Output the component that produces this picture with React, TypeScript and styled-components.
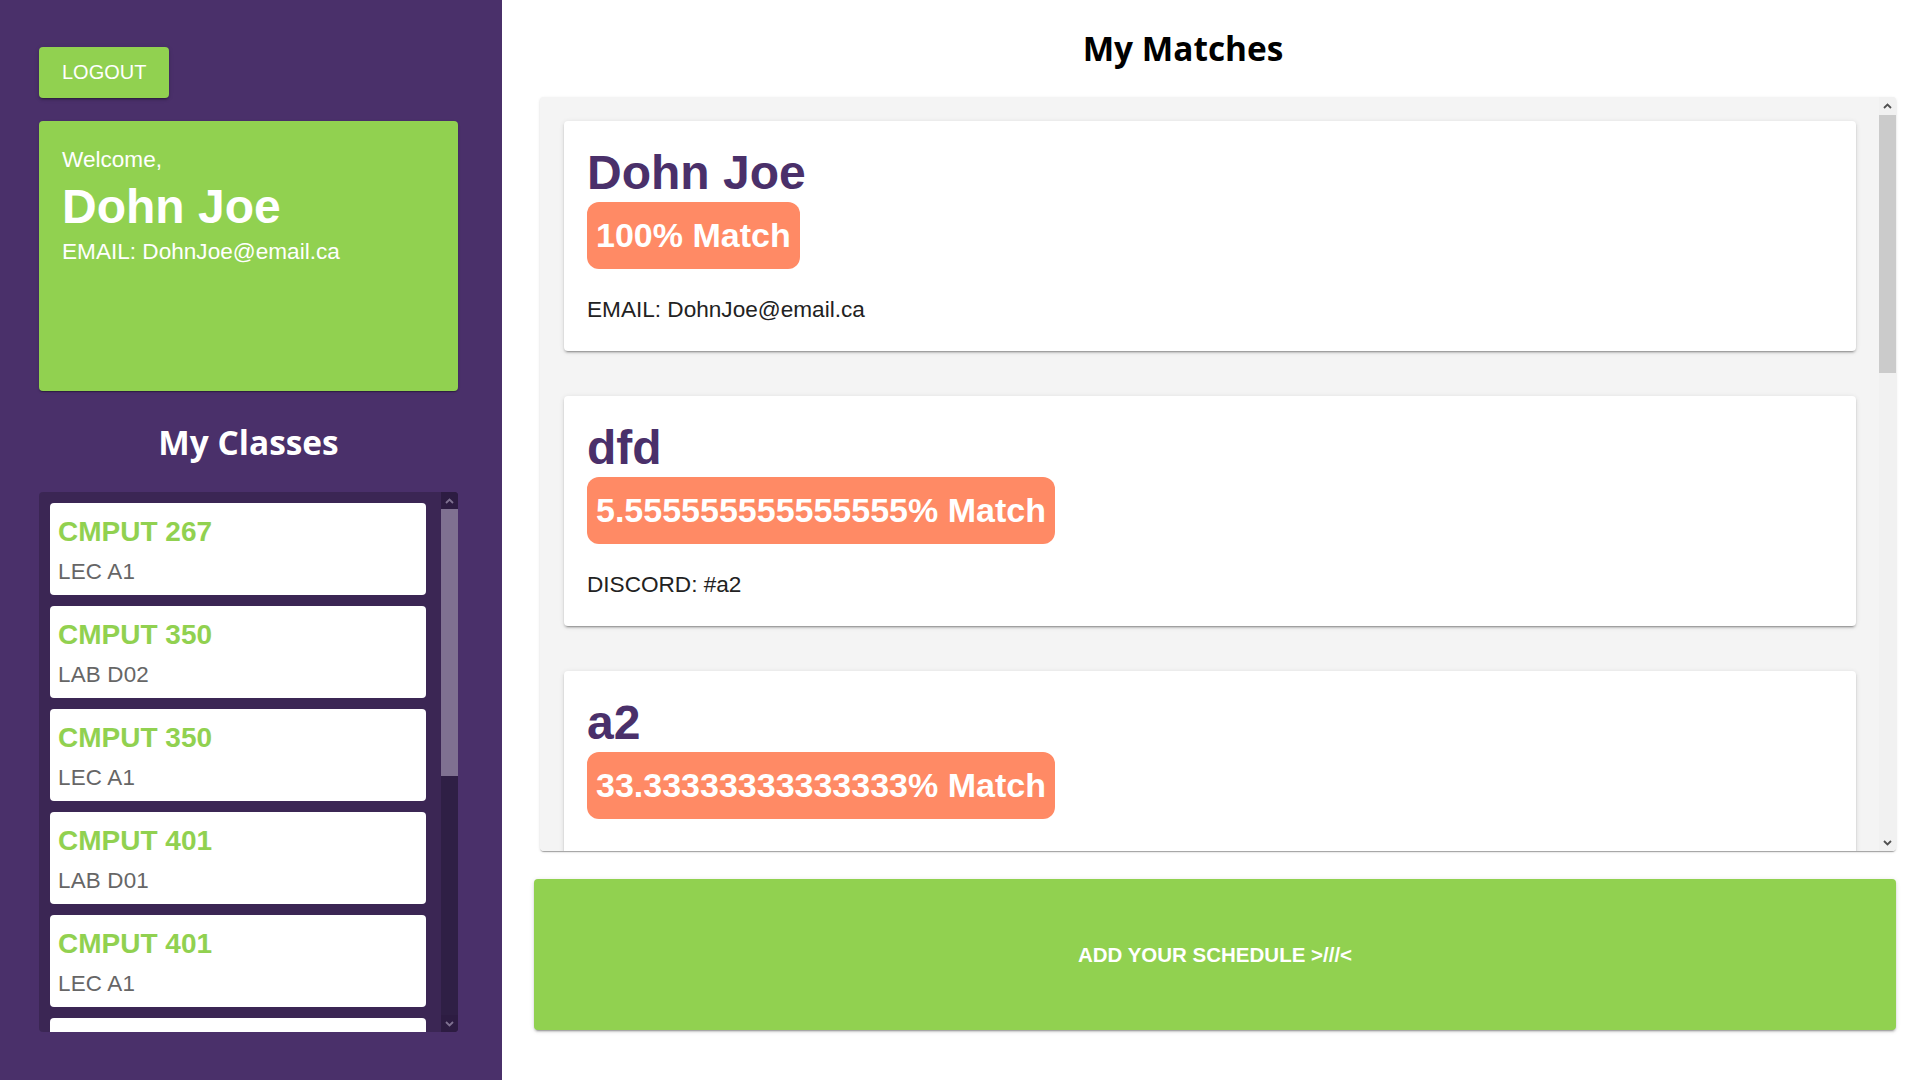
import styled, { createGlobalStyle } from 'styled-components';

const GREEN = '#91d150';
const PURPLE = '#4a306a';

const classes = [
  { id: 'c1', code: 'CMPUT 267', section: 'LEC A1' },
  { id: 'c2', code: 'CMPUT 350', section: 'LAB D02' },
  { id: 'c3', code: 'CMPUT 350', section: 'LEC A1' },
  { id: 'c4', code: 'CMPUT 401', section: 'LAB D01' },
  { id: 'c5', code: 'CMPUT 401', section: 'LEC A1' },
  { id: 'c6', code: 'CMPUT 404', section: 'LEC B1' },
];

const matches = [
  { id: 'm1', name: 'Dohn Joe', percent: '100', contact: 'EMAIL: DohnJoe@email.ca' },
  { id: 'm2', name: 'dfd', percent: '5.555555555555555', contact: 'DISCORD: #a2' },
  { id: 'm3', name: 'a2', percent: '33.33333333333333', contact: 'EMAIL: a2@email.ca' },
];

type BarColors = { track: string; thumb: string; button: string; arrow: string };

const darkBar: BarColors = { track: '#2f1f45', thumb: '#7f7191', button: '#2d1c42', arrow: '#7f7191' };
const lightBar: BarColors = { track: '#f1f1f1', thumb: '#cbcbcb', button: '#f1f1f1', arrow: '#505050' };

const Chevron = ({ up, color }: { up?: boolean; color: string }) => (
  <svg width="9" height="6" viewBox="0 0 9 6">
    <polyline
      points={up ? '1,5 4.5,1.5 8,5' : '1,1 4.5,4.5 8,1'}
      fill="none"
      stroke={color}
      strokeWidth="1.8"
    />
  </svg>
);

const Scrollbar = ({ colors, offset, size }: { colors: BarColors; offset: number; size: number }) => (
  <Bar $bg={colors.track}>
    <BarButton $bg={colors.button}>
      <Chevron up color={colors.arrow} />
    </BarButton>
    <Track>
      <Thumb $bg={colors.thumb} $offset={offset} $size={size} />
    </Track>
    <BarButton $bg={colors.button}>
      <Chevron color={colors.arrow} />
    </BarButton>
  </Bar>
);

const App = () => {
  return (
    <>
      <GlobalStyle />
      <Page>
        <Sidebar>
          <LogoutButton>LOGOUT</LogoutButton>
          <WelcomeCard>
            <Greeting>Welcome,</Greeting>
            <UserName>Dohn Joe</UserName>
            <Greeting>EMAIL: DohnJoe@email.ca</Greeting>
          </WelcomeCard>
          <SideTitle>My Classes</SideTitle>
          <ClassFrame>
            <ClassList>
              {classes.map((item) => (
                <ClassCard key={item.id}>
                  <ClassCode>{item.code}</ClassCode>
                  <ClassSection>{item.section}</ClassSection>
                </ClassCard>
              ))}
            </ClassList>
            <Scrollbar colors={darkBar} offset={0} size={267} />
          </ClassFrame>
        </Sidebar>

        <Main>
          <PageTitle>My Matches</PageTitle>
          <MatchFrame>
            <MatchList>
              {matches.map((match) => (
                <MatchCard key={match.id}>
                  <MatchName>{match.name}</MatchName>
                  <MatchBadge>{match.percent}% Match</MatchBadge>
                  <Contact>{match.contact}</Contact>
                </MatchCard>
              ))}
            </MatchList>
            <Scrollbar colors={lightBar} offset={1} size={258} />
          </MatchFrame>
          <ScheduleButton>ADD YOUR SCHEDULE &gt;///&lt;</ScheduleButton>
        </Main>
      </Page>
    </>
  );
};

const GlobalStyle = createGlobalStyle`
  * {
    box-sizing: border-box;
  }

  body {
    margin: 0;
    font-family: 'Liberation Sans', Arial, sans-serif;
  }
`;

const Page = styled.div`
  display: flex;
  height: 100vh;
  overflow: hidden;
`;

const Sidebar = styled.aside`
  width: 502px;
  flex-shrink: 0;
  padding: 47px 44px 48px 39px;

  display: flex;
  flex-direction: column;

  background-color: ${PURPLE};
`;

const LogoutButton = styled.button`
  align-self: flex-start;
  height: 51px;
  padding: 0 23px;

  font-family: 'Liberation Sans', Arial, sans-serif;
  font-size: 20px;
  color: #ffffff;

  background-color: ${GREEN};
  border: none;
  border-radius: 4px;
  box-shadow: 0 3px 1px -2px rgba(0, 0, 0, 0.2), 0 2px 2px 0 rgba(0, 0, 0, 0.14),
    0 1px 5px 0 rgba(0, 0, 0, 0.12);
`;

const WelcomeCard = styled.section`
  height: 270px;
  margin-top: 23px;
  padding: 26px 23px;

  color: #ffffff;
  background-color: ${GREEN};
  border-radius: 4px;
  box-shadow: 0 2px 1px -1px rgba(0, 0, 0, 0.2), 0 1px 1px 0 rgba(0, 0, 0, 0.14),
    0 1px 3px 0 rgba(0, 0, 0, 0.12);
`;

const Greeting = styled.div`
  font-size: 22.6px;
  line-height: 26px;
`;

const UserName = styled.div`
  margin: 6px 0 5px;

  font-size: 48px;
  font-weight: 700;
  line-height: 55px;
`;

const SideTitle = styled.h2`
  margin: 28px 0 27px;

  font-family: 'Open Sans', sans-serif;
  font-size: 33.4px;
  font-weight: 700;
  line-height: 46px;
  text-align: center;
  color: #ffffff;
`;

// list + hand drawn scrollbar side by side, the list clips what runs past the bottom
const ClassFrame = styled.div`
  flex: 1;
  min-height: 0;

  display: grid;
  grid-template-columns: minmax(0, 1fr) 17px;
  grid-template-rows: minmax(0, 1fr);

  background-color: rgba(0, 0, 0, 0.2);
  border-radius: 4px;
`;

const ClassList = styled.div`
  padding: 11px 15px 0 11px;

  display: flex;
  flex-direction: column;
  gap: 11px;

  overflow: hidden;
`;

const ClassCard = styled.div`
  flex-shrink: 0;
  padding: 13px 8px 11px;

  background-color: #ffffff;
  border-radius: 4px;
`;

const ClassCode = styled.div`
  margin-bottom: 11px;

  font-size: 28px;
  font-weight: 700;
  line-height: 32px;
  color: ${GREEN};
`;

const ClassSection = styled.div`
  font-size: 22.4px;
  line-height: 25px;
  letter-spacing: 0.2px;
  color: #666666;
`;

const Bar = styled.div<{ $bg: string }>`
  display: flex;
  flex-direction: column;

  background-color: ${(p) => p.$bg};
  border-radius: 0 4px 4px 0;
  overflow: hidden;
`;

const BarButton = styled.div<{ $bg: string }>`
  height: 17px;
  flex-shrink: 0;

  display: flex;
  align-items: center;
  justify-content: center;

  background-color: ${(p) => p.$bg};
`;

const Track = styled.div`
  flex: 1;
  min-height: 0;
  display: flex;
  flex-direction: column;
`;

const Thumb = styled.div<{ $bg: string; $offset: number; $size: number }>`
  height: ${(p) => p.$size}px;
  margin-top: ${(p) => p.$offset}px;

  background-color: ${(p) => p.$bg};
`;

const Main = styled.main`
  flex: 1;
  min-width: 0;
  padding: 25px 24px 50px 32px;

  display: flex;
  flex-direction: column;

  background-color: #ffffff;
`;

const PageTitle = styled.h1`
  margin: 0 0 26px;
  padding-right: 64px;

  font-family: 'Open Sans', sans-serif;
  font-size: 33.4px;
  font-weight: 700;
  line-height: 46px;
  text-align: center;
  color: #000000;
`;

const MatchFrame = styled.div`
  height: 754px;
  flex-shrink: 0;
  margin-left: 6px;

  display: grid;
  grid-template-columns: minmax(0, 1fr) 17px;
  grid-template-rows: minmax(0, 1fr);

  background-color: #f4f4f4;
  border-radius: 4px;
  box-shadow: 0 2px 1px -1px rgba(0, 0, 0, 0.2), 0 1px 1px 0 rgba(0, 0, 0, 0.14),
    0 1px 3px 0 rgba(0, 0, 0, 0.12);
`;

const MatchList = styled.div`
  padding: 24px 23px 0 24px;

  display: flex;
  flex-direction: column;
  gap: 45px;

  overflow: hidden;
  background-color: #f4f4f4;
  border-radius: 4px 0 0 4px;
`;

const MatchCard = styled.article`
  flex-shrink: 0;
  padding: 24px 24px 29px 23px;

  display: flex;
  flex-direction: column;
  align-items: flex-start;

  background-color: #ffffff;
  border-radius: 4px;
  box-shadow: 0 3px 1px -2px rgba(0, 0, 0, 0.2), 0 2px 2px 0 rgba(0, 0, 0, 0.14),
    0 1px 5px 0 rgba(0, 0, 0, 0.12);
`;

const MatchName = styled.div`
  margin-bottom: 2px;

  font-size: 48px;
  font-weight: 700;
  line-height: 55px;
  color: ${PURPLE};
`;

const MatchBadge = styled.div`
  padding: 12px 9px;

  font-size: 34px;
  font-weight: 700;
  line-height: 43px;
  color: #ffffff;

  background-color: #ff8a65;
  border-radius: 12px;
`;

const Contact = styled.div`
  margin-top: 28px;

  font-size: 22.6px;
  line-height: 25px;
  color: #222222;
`;

const ScheduleButton = styled.button`
  height: 151px;
  flex-shrink: 0;
  margin-top: 28px;

  font-family: 'Liberation Sans', Arial, sans-serif;
  font-size: 20.5px;
  font-weight: 700;
  color: #ffffff;

  background-color: ${GREEN};
  border: none;
  border-radius: 4px;
  box-shadow: 0 3px 1px -2px rgba(0, 0, 0, 0.2), 0 2px 2px 0 rgba(0, 0, 0, 0.14),
    0 1px 5px 0 rgba(0, 0, 0, 0.12);
`;

export default App;
